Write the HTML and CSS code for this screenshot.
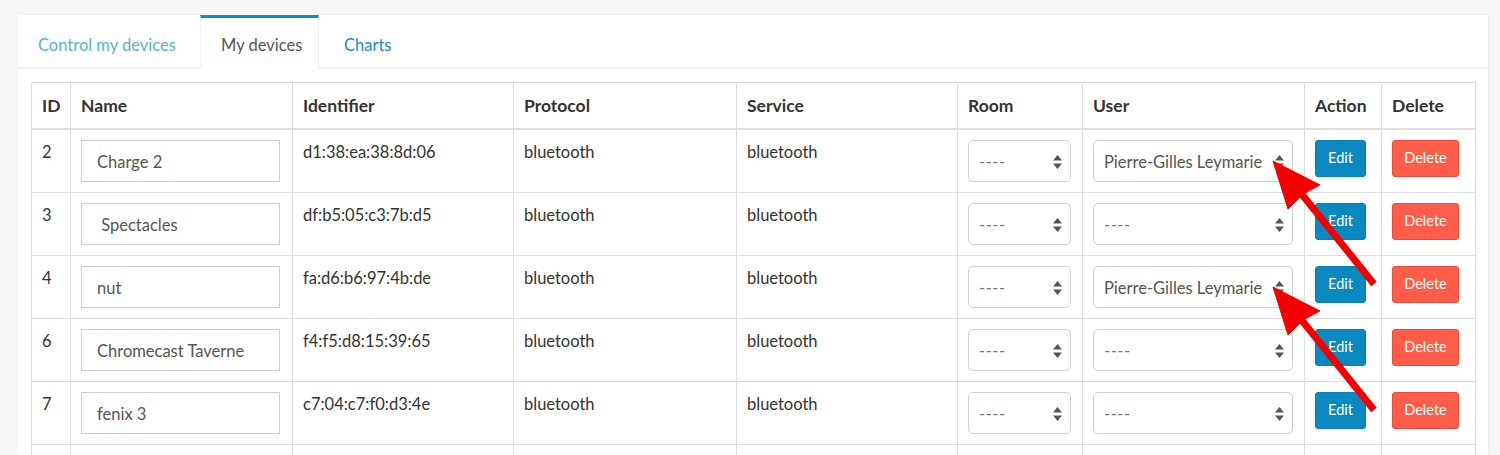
FILE: index.html
```html
<!DOCTYPE html>
<html>
<head>
<meta charset="utf-8">
<link rel="stylesheet" href="styles.css">
</head>
<body>
<div class="panel">
  <div class="tabs">
    <div class="tab tab-muted">Control my devices</div>
    <div class="tab tab-active">My devices</div>
    <div class="tab tab-link">Charts</div>
  </div>
  <div class="content">
    <table class="devices">
      <colgroup>
        <col class="c-id"><col class="c-name"><col class="c-ident"><col class="c-proto"><col class="c-serv"><col class="c-room"><col class="c-user"><col class="c-act"><col class="c-del">
      </colgroup>
      <thead>
        <tr><th>ID</th><th>Name</th><th>Identifier</th><th>Protocol</th><th>Service</th><th>Room</th><th>User</th><th>Action</th><th>Delete</th></tr>
      </thead>
      <tbody>
        <tr>
          <td>2</td>
          <td><div class="input name-input">Charge 2</div></td>
          <td>d1:38:ea:38:8d:06</td><td>bluetooth</td><td>bluetooth</td>
          <td><div class="select room-select"><span class="sel-text muted">----</span><svg class="caret" width="9" height="14" viewBox="0 0 9 14"><path d="M4.5 0 L9 5.5 H0 Z M0 8.5 H9 L4.5 14 Z" fill="#555"/></svg></div></td>
          <td><div class="select user-select"><span class="sel-text">Pierre-Gilles Leymarie</span><svg class="caret" width="9" height="14" viewBox="0 0 9 14"><path d="M4.5 0 L9 5.5 H0 Z M0 8.5 H9 L4.5 14 Z" fill="#555"/></svg></div></td>
          <td><span class="btn btn-edit">Edit</span></td>
          <td><span class="btn btn-delete">Delete</span></td>
        </tr>
        <tr>
          <td>3</td>
          <td><div class="input name-input">&nbsp;Spectacles</div></td>
          <td>df:b5:05:c3:7b:d5</td><td>bluetooth</td><td>bluetooth</td>
          <td><div class="select room-select"><span class="sel-text muted">----</span><svg class="caret" width="9" height="14" viewBox="0 0 9 14"><path d="M4.5 0 L9 5.5 H0 Z M0 8.5 H9 L4.5 14 Z" fill="#555"/></svg></div></td>
          <td><div class="select user-select"><span class="sel-text muted">----</span><svg class="caret" width="9" height="14" viewBox="0 0 9 14"><path d="M4.5 0 L9 5.5 H0 Z M0 8.5 H9 L4.5 14 Z" fill="#555"/></svg></div></td>
          <td><span class="btn btn-edit">Edit</span></td>
          <td><span class="btn btn-delete">Delete</span></td>
        </tr>
        <tr>
          <td>4</td>
          <td><div class="input name-input">nut</div></td>
          <td>fa:d6:b6:97:4b:de</td><td>bluetooth</td><td>bluetooth</td>
          <td><div class="select room-select"><span class="sel-text muted">----</span><svg class="caret" width="9" height="14" viewBox="0 0 9 14"><path d="M4.5 0 L9 5.5 H0 Z M0 8.5 H9 L4.5 14 Z" fill="#555"/></svg></div></td>
          <td><div class="select user-select"><span class="sel-text">Pierre-Gilles Leymarie</span><svg class="caret" width="9" height="14" viewBox="0 0 9 14"><path d="M4.5 0 L9 5.5 H0 Z M0 8.5 H9 L4.5 14 Z" fill="#555"/></svg></div></td>
          <td><span class="btn btn-edit">Edit</span></td>
          <td><span class="btn btn-delete">Delete</span></td>
        </tr>
        <tr>
          <td>6</td>
          <td><div class="input name-input">Chromecast Taverne</div></td>
          <td>f4:f5:d8:15:39:65</td><td>bluetooth</td><td>bluetooth</td>
          <td><div class="select room-select"><span class="sel-text muted">----</span><svg class="caret" width="9" height="14" viewBox="0 0 9 14"><path d="M4.5 0 L9 5.5 H0 Z M0 8.5 H9 L4.5 14 Z" fill="#555"/></svg></div></td>
          <td><div class="select user-select"><span class="sel-text muted">----</span><svg class="caret" width="9" height="14" viewBox="0 0 9 14"><path d="M4.5 0 L9 5.5 H0 Z M0 8.5 H9 L4.5 14 Z" fill="#555"/></svg></div></td>
          <td><span class="btn btn-edit">Edit</span></td>
          <td><span class="btn btn-delete">Delete</span></td>
        </tr>
        <tr>
          <td>7</td>
          <td><div class="input name-input">fenix 3</div></td>
          <td>c7:04:c7:f0:d3:4e</td><td>bluetooth</td><td>bluetooth</td>
          <td><div class="select room-select"><span class="sel-text muted">----</span><svg class="caret" width="9" height="14" viewBox="0 0 9 14"><path d="M4.5 0 L9 5.5 H0 Z M0 8.5 H9 L4.5 14 Z" fill="#555"/></svg></div></td>
          <td><div class="select user-select"><span class="sel-text muted">----</span><svg class="caret" width="9" height="14" viewBox="0 0 9 14"><path d="M4.5 0 L9 5.5 H0 Z M0 8.5 H9 L4.5 14 Z" fill="#555"/></svg></div></td>
          <td><span class="btn btn-edit">Edit</span></td>
          <td><span class="btn btn-delete">Delete</span></td>
        </tr>
        <tr class="empty-row">
          <td></td><td></td><td></td><td></td><td></td><td></td><td></td><td></td><td></td>
        </tr>
      </tbody>
    </table>
  </div>
</div>
<svg class="annotations" width="1500" height="455" viewBox="0 0 1500 455">
  <g fill="#f50000" stroke="#f50000">
    <line x1="1300" y1="192" x2="1374" y2="284" stroke-width="7" stroke-linecap="butt"/>
    <polygon points="1273,161 1320,185 1303,194 1288,209" stroke-width="1" stroke-linejoin="round"/>
    <line x1="1300" y1="318" x2="1374" y2="410" stroke-width="7" stroke-linecap="butt"/>
    <polygon points="1273,287 1320,311 1303,320 1288,335" stroke-width="1" stroke-linejoin="round"/>
  </g>
</svg>
</body>
</html>
```

FILE: styles.css
```css
* { box-sizing: border-box; }

html, body {
  margin: 0;
  padding: 0;
}

body {
  background: #f7f7f7;
  font-family: Lato, "Liberation Sans", sans-serif;
  font-size: 16.5px;
  color: #333;
  width: 1500px;
  height: 455px;
  overflow: hidden;
  position: relative;
}

.panel {
  margin: 15px 12px 0 18px;
  background: #fff;
  box-shadow: 1px 0 2px rgba(0, 0, 0, 0.06);
  height: 440px;
  overflow: hidden;
}

.tabs {
  display: flex;
  height: 54px;
  border-bottom: 2px solid #f0f0f0;
}

.tab {
  display: flex;
  align-items: center;
  height: 54px;
  font-size: 16.5px;
  white-space: nowrap;
  padding-top: 6px;
}

.tab-muted {
  color: #5ab1d9;
  width: 182px;
  padding-left: 20px;
}

.tab-active {
  color: #555;
  width: 119px;
  padding-left: 20px;
  border-top: 3px solid #0a8ac6;
  border-right: 1px solid #f0f0f0;
  border-left: 1px solid #f4f4f4;
  background: #fff;
  margin-bottom: -2px;
  padding-top: 2px;
}

.tab-link {
  color: #1a8bc4;
  padding-left: 25px;
}

.content {
  padding: 13px 13px 0 13px;
}

.devices {
  border-collapse: collapse;
  table-layout: fixed;
  width: 1444px;
  border: 1px solid #dedede;
}

.c-id { width: 39px; }
.c-name { width: 222px; }
.c-ident { width: 221px; }
.c-proto { width: 223px; }
.c-serv { width: 221px; }
.c-room { width: 125px; }
.c-user { width: 222px; }
.c-act { width: 77px; }
.c-del { width: 94px; }

.devices th,
.devices td {
  border: 1px solid #dedede;
  text-align: left;
  vertical-align: top;
  padding: 10px 10px;
  line-height: 24px;
  white-space: nowrap;
}

.devices th {
  font-weight: 700;
  font-size: 17.5px;
  color: #333;
  border-bottom: 2px solid #dedede;
  height: 46px;
  padding-top: 11px;
  line-height: 23px;
}

.devices td {
  height: 63px;
  color: #333;
}

.empty-row td {
  height: 40px;
}

.input {
  height: 42px;
  border: 1px solid #cfcfcf;
  padding: 0 15px;
  display: flex;
  align-items: center;
  color: #555;
  padding-top: 2px;
}

.name-input {
  width: 199px;
}

.select {
  height: 42px;
  border: 1px solid #d0d0d0;
  border-radius: 5px;
  display: flex;
  align-items: center;
  justify-content: space-between;
  padding: 2px 8px 0 10px;
  color: #555;
}

.room-select { width: 103px; }
.user-select { width: 200px; }

.sel-text.muted {
  color: #777;
  letter-spacing: 0.5px;
}

.caret {
  flex: none;
  display: block;
}

.btn {
  display: inline-flex;
  align-items: center;
  justify-content: center;
  height: 37px;
  border-radius: 3px;
  color: #fff;
  font-size: 14.5px;
}

.btn-edit {
  width: 51px;
  background: #0a88c0;
  border: 1px solid #0880b6;
}

.btn-delete {
  width: 67px;
  background: #ff5d4a;
  border: 1px solid #ec4a38;
}

.annotations {
  position: absolute;
  top: 0;
  left: 0;
  pointer-events: none;
}
```
